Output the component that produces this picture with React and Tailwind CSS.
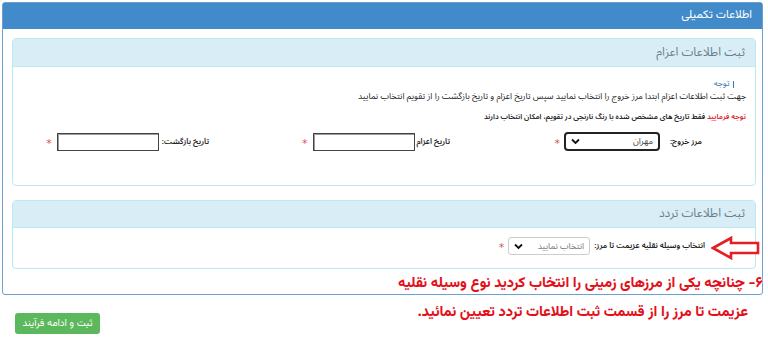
import React from "react";

function Chevron() {
  return (
    <svg width="9" height="7" viewBox="0 0 9 7" className="shrink-0">
      <path d="M1 1.5 L4.5 5 L8 1.5" fill="none" stroke="#111" strokeWidth="1.8" />
    </svg>
  );
}

function Star() {
  return <span className="text-[#d9534f] text-[11px] leading-none mt-[3px] font-['DejaVu_Sans']">*</span>;
}

export default function App() {
  return (
    <div
      dir="rtl"
      className="relative w-[768px] h-[349px] overflow-hidden bg-white text-[#333] font-['Noto_Sans_Arabic','DejaVu_Sans',sans-serif]"
    >
      <div className="mt-[2px] ml-[2px] mr-[5px] border border-[#6d9fd0] rounded-[3px]">
        <div className="h-[26px] bg-[#428bca] text-white text-[11.5px] flex items-center pr-[10px] font-['Vazirmatn','Noto_Sans_Arabic',sans-serif]">
          اطلاعات تکمیلی
        </div>
        <div className="pt-[9px] pb-[25px] pl-[9px] pr-[6px]">
          {/* Panel 1 */}
          <div className="border border-[#bce8f1] rounded-[4px]">
            <div className="h-[28px] bg-[#d9edf7] flex items-center pr-[10px] text-[12px] text-[#6a7f8c] border-b border-[#bce8f1]">
              ثبت اطلاعات اعزام
            </div>
            <div className="pt-[10px] pb-[34px] pr-[9px]">
              <div className="h-[13px] text-[8.6px] leading-[13px] text-[#3a78b5] flex items-center gap-[3px] pr-[12px]">
                <span className="inline-block w-[1.5px] h-[7px] bg-[#3a78b5] mt-[2px]" />
                <span>توجه</span>
              </div>
              <div className="text-[8.6px] leading-[13px] text-[#222]">
                جهت ثبت اطلاعات اعزام ابتدا مرز خروج را انتخاب نمایید سپس تاریخ اعزام و تاریخ بازگشت را از تقویم انتخاب نمایید
              </div>
              <div className="mt-[7px] text-[7.4px] leading-[14px] font-semibold text-[#222]">
                <span className="text-[#e0252b]">توجه فرمایید</span> فقط تاریخ های مشخص شده با رنگ نارنجی در تقویم، امکان انتخاب دارند
              </div>
              <div className="mt-[8px] flex pr-[44px]">
                <div className="w-[252px] flex items-center">
                  <span className="font-semibold text-[7.8px] text-[#222]">مرز خروج:</span>
                  <div className="mr-[10px] ml-[4px] w-[96px] h-[19px] border-2 border-[#222] rounded-[4px] flex items-center justify-between px-[5px]">
                    <span className="text-[8.6px] text-[#444]">مهران</span>
                    <Chevron />
                  </div>
                  <Star />
                </div>
                <div className="w-[241px] flex items-center">
                  <span className="font-semibold text-[7.8px] text-[#222]">تاریخ اعزام</span>
                  <div className="mr-[2px] ml-[5px] w-[102px] h-[18px] border border-[#444] shadow-[inset_1px_1px_0_#999]" />
                  <Star />
                </div>
                <div className="flex items-center">
                  <span className="font-semibold text-[7.8px] text-[#222]">تاریخ بازگشت:</span>
                  <div className="mr-[3px] ml-[5px] w-[102px] h-[18px] border border-[#444] shadow-[inset_1px_1px_0_#999]" />
                  <Star />
                </div>
              </div>
            </div>
          </div>

          {/* Panel 2 */}
          <div className="mt-[14px] border border-[#bce8f1] rounded-[4px]">
            <div className="h-[27px] bg-[#d9edf7] flex items-center pr-[10px] text-[12px] text-[#6a7f8c] border-b border-[#bce8f1]">
              ثبت اطلاعات تردد
            </div>
            <div className="pt-[9px] pb-[13px] pr-[50px] flex items-center">
              <span className="font-semibold text-[7.8px] text-[#222]">انتخاب وسیله نقلیه عزیمت تا مرز:</span>
              <div className="mr-[4px] ml-[4px] w-[82px] h-[18px] border border-[#ccc] rounded-[3px] flex items-center justify-between px-[5px]">
                <span className="text-[8.6px] text-[#777]">انتخاب نمایید</span>
                <Chevron />
              </div>
              <Star />
            </div>
          </div>
        </div>
      </div>

      <div className="flex justify-end pl-[15px] mt-[18px]">
        <div className="w-[85px] h-[21px] bg-[#5cb85c] rounded-[3px] text-white text-[10px] flex items-center justify-center font-['Vazirmatn','Noto_Sans_Arabic',sans-serif]">
          ثبت و ادامه فرآیند
        </div>
      </div>

      {/* Arrow annotation */}
      <svg className="absolute left-[711px] top-[235px]" width="50" height="25" viewBox="0 0 50 25">
        <path
          d="M2 13 L20 3 L20 8 L47 8 L47 18 L20 18 L20 23 Z"
          fill="#fff"
          stroke="#e31e24"
          strokeWidth="2.6"
          strokeLinejoin="miter"
        />
      </svg>

      {/* Red text annotation */}
      <div className="absolute top-[272px] right-[5px] text-[#e3101a] font-['Vazirmatn',sans-serif] font-extrabold text-[14.5px] leading-[24px] [text-shadow:0_0_2px_#fff,0_0_2px_#fff]">
        ۶- چنانچه یکی از مرزهای زمینی را انتخاب کردید نوع وسیله نقلیه
      </div>
      <div className="absolute top-[301px] right-[20px] text-[#e3101a] font-['Vazirmatn',sans-serif] font-extrabold text-[14.5px] leading-[24px] [text-shadow:0_0_2px_#fff,0_0_2px_#fff]">
        عزیمت تا مرز را از قسمت ثبت اطلاعات تردد تعیین نمائید.
      </div>
    </div>
  );
}
